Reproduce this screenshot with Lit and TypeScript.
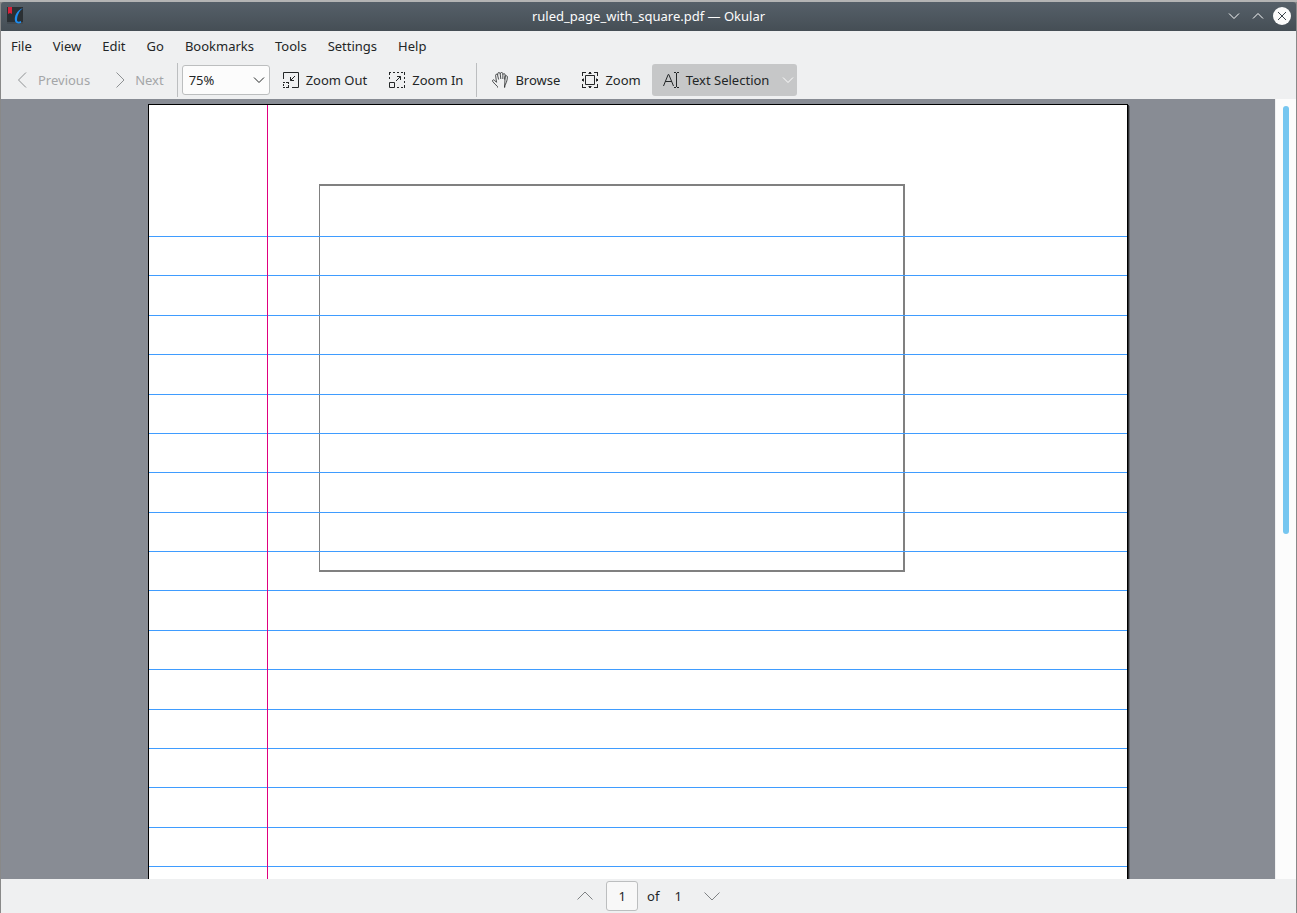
import { LitElement, html, css, svg } from "lit";
import { customElement, state } from "lit/decorators.js";

const MENUS = ["File", "View", "Edit", "Go", "Bookmarks", "Tools", "Settings", "Help"];

const glyphs = {
  prev: svg`<path d="M11 .5 3.500 8l7.500 7.500"/>`,
  next: svg`<path d="M4.500 .5 12 8 4.500 15.500"/>`,
  up: svg`<path d="M.5 11.500 8 4l7.500 7.500"/>`,
  down: svg`<path d="M.5 4.500 8 12l7.500-7.500"/>`,
  smallDown: svg`<path d="M3 5.500 8 10.500l5-5"/>`,
  smallUp: svg`<path d="M3 10.500 8 5.500l5 5"/>`,
  zoomOut: svg`<path d="M.5 7V.5h15v15H9"/><path d="M12 4 7.500 8.500M7.500 5v3.500H11"/><path d="M0 10.500h2m1 0h2M.5 12v2m5-4v2m0 1v3M0 15.500h2m1 0h2"/>`,
  zoomIn: svg`<path d="M.5 10.500h5v5h-5z"/><path d="M7 9l4.500-4.500M8 4.500h3.500V8"/><path d="M0 .5h2m2 0h2m2 0h2m2 0h2m1 0h1M.5 1v2m0 2v2M15.500 0v3m0 2v2m0 2v2m0 2v3M8 15.500h2m2 0h2"/>`,
  browse: svg`<path stroke-width=".8" d="M5.500 15.500v-1C3.500 13 1.800 10.800.6 9.300c-.6-1.200.9-2 1.800-1.100L4.500 10.300 3.600 3.400c-.1-1.400 1.700-1.600 2-.2L6.600 7.500M5.700 3.200V1.800c0-1.600 2.300-1.700 2.500-.1L8.800 7M8.200 1.700c.1-1.600 2.700-1.600 2.700.1L10.800 7M10.900 2.500c.5-1.300 2.400-.9 2.300.5L12.600 7.500M13.100 4.200c.8-1 2.400-.4 2.300.8-.1 3-.9 5.200-1.900 7.200-.6 1-.9 1.800-.9 3.300z"/>`,
  zoom: svg`<path d="M3.500 3.500h9v9h-9z"/><path d="M0 .5h4M.5 0v4M12 .5h4M15.500 0v4M0 15.500h4M.5 12v4M12 15.500h4M15.500 12v4"/><path d="M7 .5h2M6.500 1.500h3M7 15.500h2M6.500 14.500h3M.5 7v2M1.500 6.500v3M15.500 7v2M14.500 6.500v3"/>`,
  select: svg`<path d="M.5 14 5.200 2.500h.6L10.500 14M2.200 9.500h6.600M13.500 1v14M11 .5h2m1 0h2M11 15.500h2m1 0h2"/>`,
};

const icon = (name: keyof typeof glyphs) =>
  html`<svg class="icon" viewBox="0 0 16 16" aria-hidden="true">${glyphs[name]}</svg>`;

const RULE_START = 131;
const RULE_PITCH = 39.375;
const rules = Array.from({ length: 17 }, (_, i) => Math.round(RULE_START + i * RULE_PITCH));

@customElement("app-root")
export class AppRoot extends LitElement {
  @state() private page = "1";

  static styles = css`
    :host {
      display: block;
      font: 13px/18px "Noto Sans", sans-serif;
      color: #232627;
      background: #b4b4b4;
    }
    * { box-sizing: border-box; }
    button, input, select { font: inherit; color: inherit; margin: 0; }
    button { border: 0; background: none; padding: 0; }
    .icon {
      width: 16px; height: 16px; flex: none; display: block;
      fill: none; stroke: currentColor; stroke-width: 1;
    }
    .window {
      display: flex; flex-direction: column; height: 100vh;
      padding: 2px 1px 0; background: linear-gradient(#b4b4b4 2px, #898989 2px);
    }
    .title {
      display: grid; grid-template-columns: 1fr auto 1fr; align-items: center;
      height: 29px; padding: 0 5px 2px; color: #fcfcfc; flex: none;
      background: linear-gradient(#566069, #454e55);
      border-radius: 3px 3px 0 0;
    }
    .title h1 { font: inherit; margin: 0; }
    .logo { width: 18px; height: 18px; display: block; }
    .controls { display: flex; justify-content: flex-end; gap: 6px; }
    .controls button {
      width: 18px; height: 18px; display: grid; place-items: center;
    }
    .controls .close { border-radius: 50%; background: #fcfcfc; color: #3b444b; }
    .menu {
      display: flex; gap: 1px; height: 31px; align-items: center;
      padding-bottom: 2px; background: #eff0f1; flex: none;
    }
    .menu button { padding: 0 10px; }
    .tools {
      display: flex; align-items: center; height: 37px; padding: 0 3px 2px;
      background: #eff0f1; flex: none;
    }
    .tool {
      display: flex; align-items: center; gap: 7px; height: 32px; padding: 0 11px;
      white-space: nowrap; border-radius: 3px;
    }
    .tool:disabled { color: #a4a6a8; }
    .tool:disabled .icon { color: #8d9092; }
    .tool.active { background: #c6c7c8; padding-right: 1px; }
    .tool.active .icon:last-child { color: #fcfcfc; margin-left: 4px; }
    .sep { width: 1px; height: 34px; background: #bcbec0; margin: 0 4px 0 2px; }
    .combo { position: relative; margin-right: 2px; }
    .combo select {
      appearance: none; width: 88px; height: 30px; padding: 0 6px; display: block;
      border: 1px solid #bcbebf; border-radius: 3px; background: #fcfcfc;
    }
    .combo .icon { position: absolute; right: 3px; top: 7px; pointer-events: none; }
    .view { display: flex; flex: 1; min-height: 0; }
    .canvas {
      flex: 1; display: flex; justify-content: center; align-items: flex-start;
      overflow: hidden; background: #888c94; padding-top: 5px;
    }
    .sheet {
      border: 1px solid #000; background: #fff;
      box-shadow: 1px 1px #2c2d30, 2px 2px #65686e;
    }
    .sheet svg { display: block; }
    .track {
      width: 21px; background: #fcfcfc; border-left: 1px solid #eff0f1;
      padding: 7px 7px 0; flex: none;
    }
    .thumb { height: 55.4%; border-radius: 3px; background: #76c6f0; }
    .pager {
      display: flex; align-items: center; justify-content: center; gap: 13px;
      height: 34px; background: #eff0f1; flex: none;
    }
    .pager button { color: #7f8284; }
    .count { display: flex; align-items: center; gap: 9px; margin-right: 9px; }
    .count output { margin-left: 6px; }
    .pager input {
      width: 32px; height: 30px; padding: 0; text-align: center;
      border: 1px solid #bcbebf; border-radius: 3px; background: #f8f8f8;
    }
  `;

  render() {
    return html`
      <div class="window">
        <header class="title">
          <svg class="logo" viewBox="0 0 18 18" aria-hidden="true">
            <path d="M1 0h16v17H1z" fill="#2b3034"/>
            <path d="M1 15h16v2H1z" fill="#434a50"/>
            <path d="M2 0h4v7L4 6 2 7z" fill="#d8213b"/>
            <path d="M17 1C11 3 8 9 9 14c.5 2 3 3 6 2v-2c-2 1-4 1-4-1 0-4 2-9 6-12z" fill="#1d8df0"/>
          </svg>
          <h1>ruled_page_with_square.pdf — Okular</h1>
          <div class="controls">
            <button aria-label="Minimize">${icon("smallDown")}</button>
            <button aria-label="Maximize">${icon("smallUp")}</button>
            <button class="close" aria-label="Close">
              <svg class="icon" viewBox="0 0 16 16"><path d="M4 4l8 8M12 4l-8 8"/></svg>
            </button>
          </div>
        </header>
        <nav class="menu">${MENUS.map((m) => html`<button>${m}</button>`)}</nav>
        <div class="tools">
          <button class="tool" disabled>${icon("prev")}Previous</button>
          <button class="tool" disabled>${icon("next")}Next</button>
          <span class="sep"></span>
          <div class="combo">
            <select aria-label="Zoom level">
              <option>75%</option><option>100%</option><option>125%</option>
            </select>
            ${icon("smallDown")}
          </div>
          <button class="tool">${icon("zoomOut")}Zoom Out</button>
          <button class="tool">${icon("zoomIn")}Zoom In</button>
          <span class="sep"></span>
          <button class="tool">${icon("browse")}Browse</button>
          <button class="tool">${icon("zoom")}Zoom</button>
          <button class="tool active" aria-pressed="true">
            ${icon("select")}Text Selection${icon("smallDown")}
          </button>
        </div>
        <main class="view">
          <div class="canvas">
            <div class="sheet">
              <svg width="978" height="1265" viewBox="0 0 978 1265" shape-rendering="crispEdges">
                <path d="M170 79h586v388H170zM171 81v384h583V81z" fill="#808080" fill-rule="evenodd"/>
                ${rules.map((y) => svg`<rect y=${y} width="978" height="1" fill="#3f9cff"/>`)}
                <rect x="118" width="1" height="1265" fill="#e0007f"/>
              </svg>
            </div>
          </div>
          <div class="track"><div class="thumb"></div></div>
        </main>
        <footer class="pager">
          <button aria-label="Previous page">${icon("up")}</button>
          <div class="count">
            <input aria-label="Page" .value=${this.page}
              @input=${(e: Event) => (this.page = (e.target as HTMLInputElement).value)} />
            <span>of</span><output>1</output>
          </div>
          <button aria-label="Next page">${icon("down")}</button>
        </footer>
      </div>
    `;
  }
}
